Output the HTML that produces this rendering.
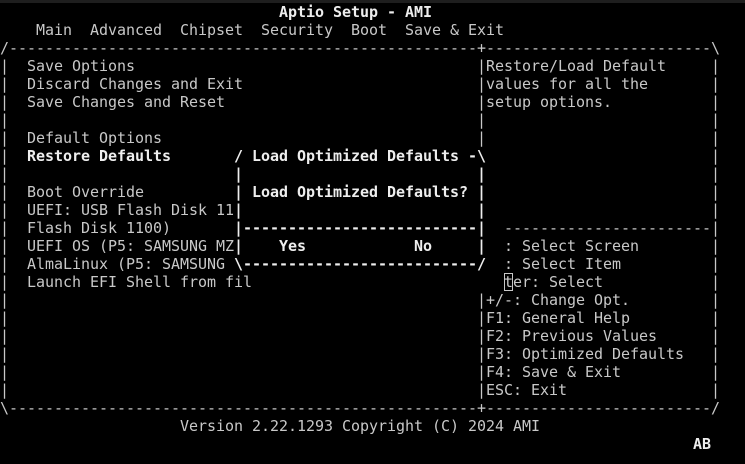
<!DOCTYPE html>
<html><head><meta charset="utf-8"><style>
html,body{margin:0;padding:0;background:#000;}
body{width:745px;height:464px;position:relative;overflow:hidden;}
.top{position:absolute;left:0;top:0;width:745px;height:3px;background:#1e1e1e;}
.c{position:absolute;white-space:pre;font-family:"DejaVu Sans Mono","Liberation Mono",monospace;font-size:15px;line-height:18px;color:#c8c8c8;letter-spacing:-0.03px;}
.b{font-weight:bold;color:#eeeeee;}
.cur{outline:1px solid #c8c8c8;outline-offset:-1px;}
</style></head><body>
<div class="top"></div>
<span class="c b" style="left:279px;top:3px">Aptio Setup - AMI</span>
<span class="c" style="left:36px;top:21px">Main  Advanced  Chipset  Security  Boot  Save &amp; Exit</span>
<span class="c" style="left:0px;top:39px">/----------------------------------------------------+-------------------------\</span>

<span class="c" style="left:0px;top:57px">|
|
|
|
|
|
|
|
|
|
|
|
|
|
|
|
|
|
|</span>
<span class="c" style="left:711px;top:57px">|
|
|
|
|
|
|
|
|
|
|
|
|
|
|
|
|
|
|</span>
<span class="c" style="left:477px;top:57px">|Restore/Load Default
|values for all the
|setup options.
|
|</span>
<span class="c" style="left:27px;top:57px">Save Options
Discard Changes and Exit
Save Changes and Reset

Default Options</span>
<span class="c b" style="left:27px;top:147px">Restore Defaults</span>
<span class="c" style="left:27px;top:183px">Boot Override
UEFI: USB Flash Disk 11
Flash Disk 1100)
UEFI OS (P5: SAMSUNG MZ
AlmaLinux (P5: SAMSUNG
Launch EFI Shell from fil</span>

<span class="c b" style="left:234px;top:147px">/ Load Optimized Defaults -\
|                          |
| Load Optimized Defaults? |
|                          |
|--------------------------|
|    Yes            No     |
\--------------------------/</span>

<span class="c" style="left:504px;top:219px">-----------------------</span>
<span class="c" style="left:504px;top:237px">: Select Screen
: Select Item
<span class="cur">t</span>er: Select</span>
<span class="c" style="left:477px;top:291px">|+/-: Change Opt.
|F1: General Help
|F2: Previous Values
|F3: Optimized Defaults
|F4: Save &amp; Exit
|ESC: Exit</span>
<span class="c" style="left:0px;top:399px">\----------------------------------------------------+-------------------------/</span>
<span class="c" style="left:180px;top:417px">Version 2.22.1293 Copyright (C) 2024 AMI</span>
<span class="c b" style="left:693px;top:435px">AB</span>
</body></html>
